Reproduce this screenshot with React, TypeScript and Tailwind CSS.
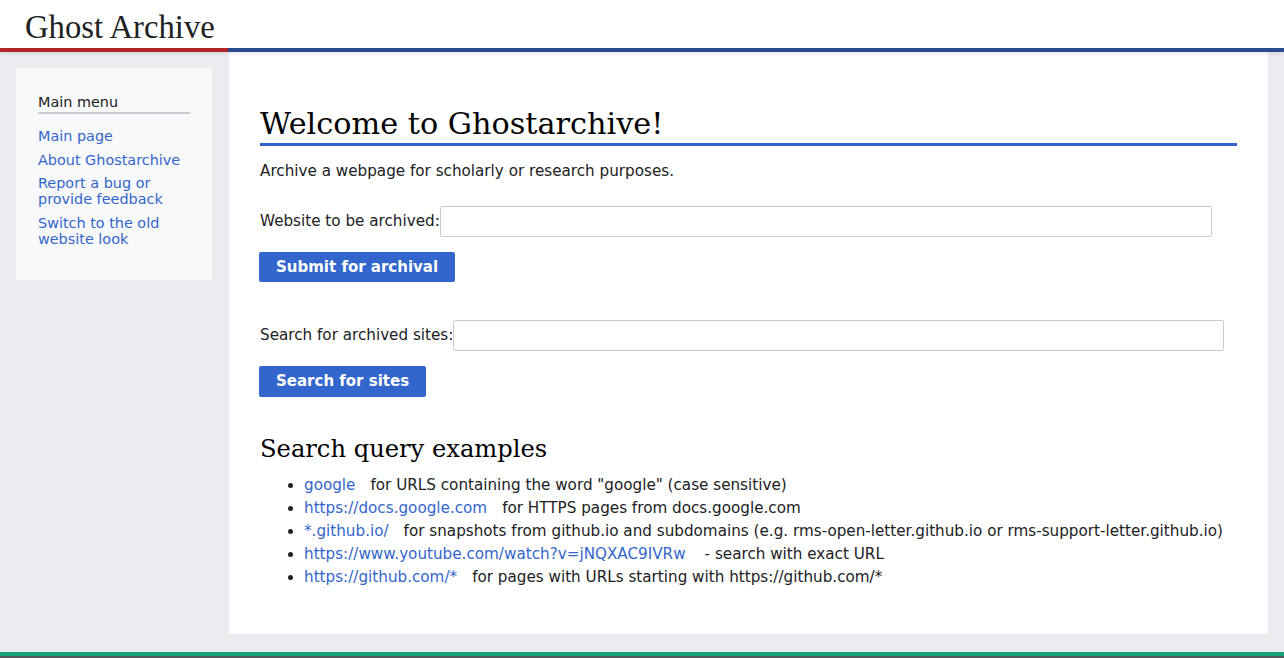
import React from "react";

const sans = "font-['DejaVu_Sans',sans-serif]";

const menu = [
  ["Main page"],
  ["About Ghostarchive"],
  ["Report a bug or", "provide feedback"],
  ["Switch to the old", "website look"],
];

const examples: [string, string, string][] = [
  ["google", "for URLS containing the word \"google\" (case sensitive)", "ml-[15px]"],
  ["https://docs.google.com", "for HTTPS pages from docs.google.com", "ml-[15px]"],
  ["*.github.io/", "for snapshots from github.io and subdomains (e.g. rms-open-letter.github.io or rms-support-letter.github.io)", "ml-[15px]"],
  ["https://www.youtube.com/watch?v=jNQXAC9IVRw", "- search with exact URL", "ml-[19px]"],
  ["https://github.com/*", "for pages with URLs starting with https://github.com/*", "ml-[15px]"],
];

export default function App() {
  return (
    <div className={`h-[658px] flex flex-col bg-[#eaecf0] text-[#202122] ${sans}`}>
      <header className="bg-white shadow-[0_2px_4px_rgba(0,0,0,0.08)] relative z-10">
        <div className="h-[48px] pl-[25px] pt-[7px]">
          <h1 className="font-['Liberation_Serif',serif] text-[32.7px] leading-[40px] text-[#202122]">Ghost Archive</h1>
        </div>
        <div className="flex h-[4px]">
          <div className="w-[228px] bg-[#b32424]" />
          <div className="flex-1 bg-[#2a4b8d]" />
        </div>
      </header>

      <div className="flex flex-1">
        <aside className="w-[229px] pl-[16px] pr-[17px] pt-[16px]">
          <nav className="bg-[#f8f9fa] px-[22px] pt-[26px] pb-[33px]">
            <h3 className="text-[14.4px] leading-[16px] text-[#202122] pb-[2px] border-b-2 border-[#c8ccd1]">Main menu</h3>
            <ul className="mt-[14px] flex flex-col gap-[8px]">
              {menu.map((lines, i) => (
                <li key={lines[0]} className={i === 2 ? "-mt-px" : ""}>
                  <a href="#" className="block text-[14.4px] leading-[16px] text-[#3366cc]">
                    {lines.map((l) => (
                      <span key={l} className="block">{l}</span>
                    ))}
                  </a>
                </li>
              ))}
            </ul>
          </nav>
        </aside>

        <main className="w-[1039px] h-[582px] bg-white pl-[31px] pr-[31px] pt-[54px]">
          <h2 className="font-['DejaVu_Serif',serif] text-[30.3px] leading-[36px] text-black pb-[1px] border-b-[3px] border-[#3366cc]">
            Welcome to Ghostarchive!
          </h2>
          <p className="mt-[14px] text-[15.2px] leading-[22px]">Archive a webpage for scholarly or research purposes.</p>

          <form className="mt-[24px]">
            <label className="flex items-center text-[15.2px]">
              Website to be archived:
              <input type="text" className="w-[772px] h-[31px] border border-[#c8ccd1] rounded-[2px]" />
            </label>
            <button type="button" className="mt-[15px] -ml-px h-[30px] px-[17px] bg-[#3366cc] text-white font-bold text-[15px] rounded-[2px]">
              Submit for archival
            </button>
          </form>

          <form className="mt-[38px]">
            <label className="flex items-center text-[15.2px]">
              Search for archived sites:
              <input type="text" className="w-[771px] h-[31px] border border-[#c8ccd1] rounded-[2px]" />
            </label>
            <button type="button" className="mt-[15px] -ml-px h-[31px] px-[17px] bg-[#3366cc] text-white font-bold text-[15px] rounded-[2px]">
              Search for sites
            </button>
          </form>

          <h2 className="mt-[37px] font-['DejaVu_Serif',serif] text-[24.2px] leading-[30px] text-black">Search query examples</h2>
          <ul className="mt-[10px] pl-[44px] list-disc text-[15.2px] leading-[23px]">
            {examples.map(([link, text, gap]) => (
              <li key={link}>
                <a href="#" className="text-[#3366cc]">{link}</a>
                <span className={gap}>{text}</span>
              </li>
            ))}
          </ul>
        </main>
      </div>

      <footer className="h-[6px] mt-[18px]">
        <div className="h-[4px] bg-[#14a37f]" />
        <div className="h-[2px] bg-[#54595d]" />
      </footer>
    </div>
  );
}
